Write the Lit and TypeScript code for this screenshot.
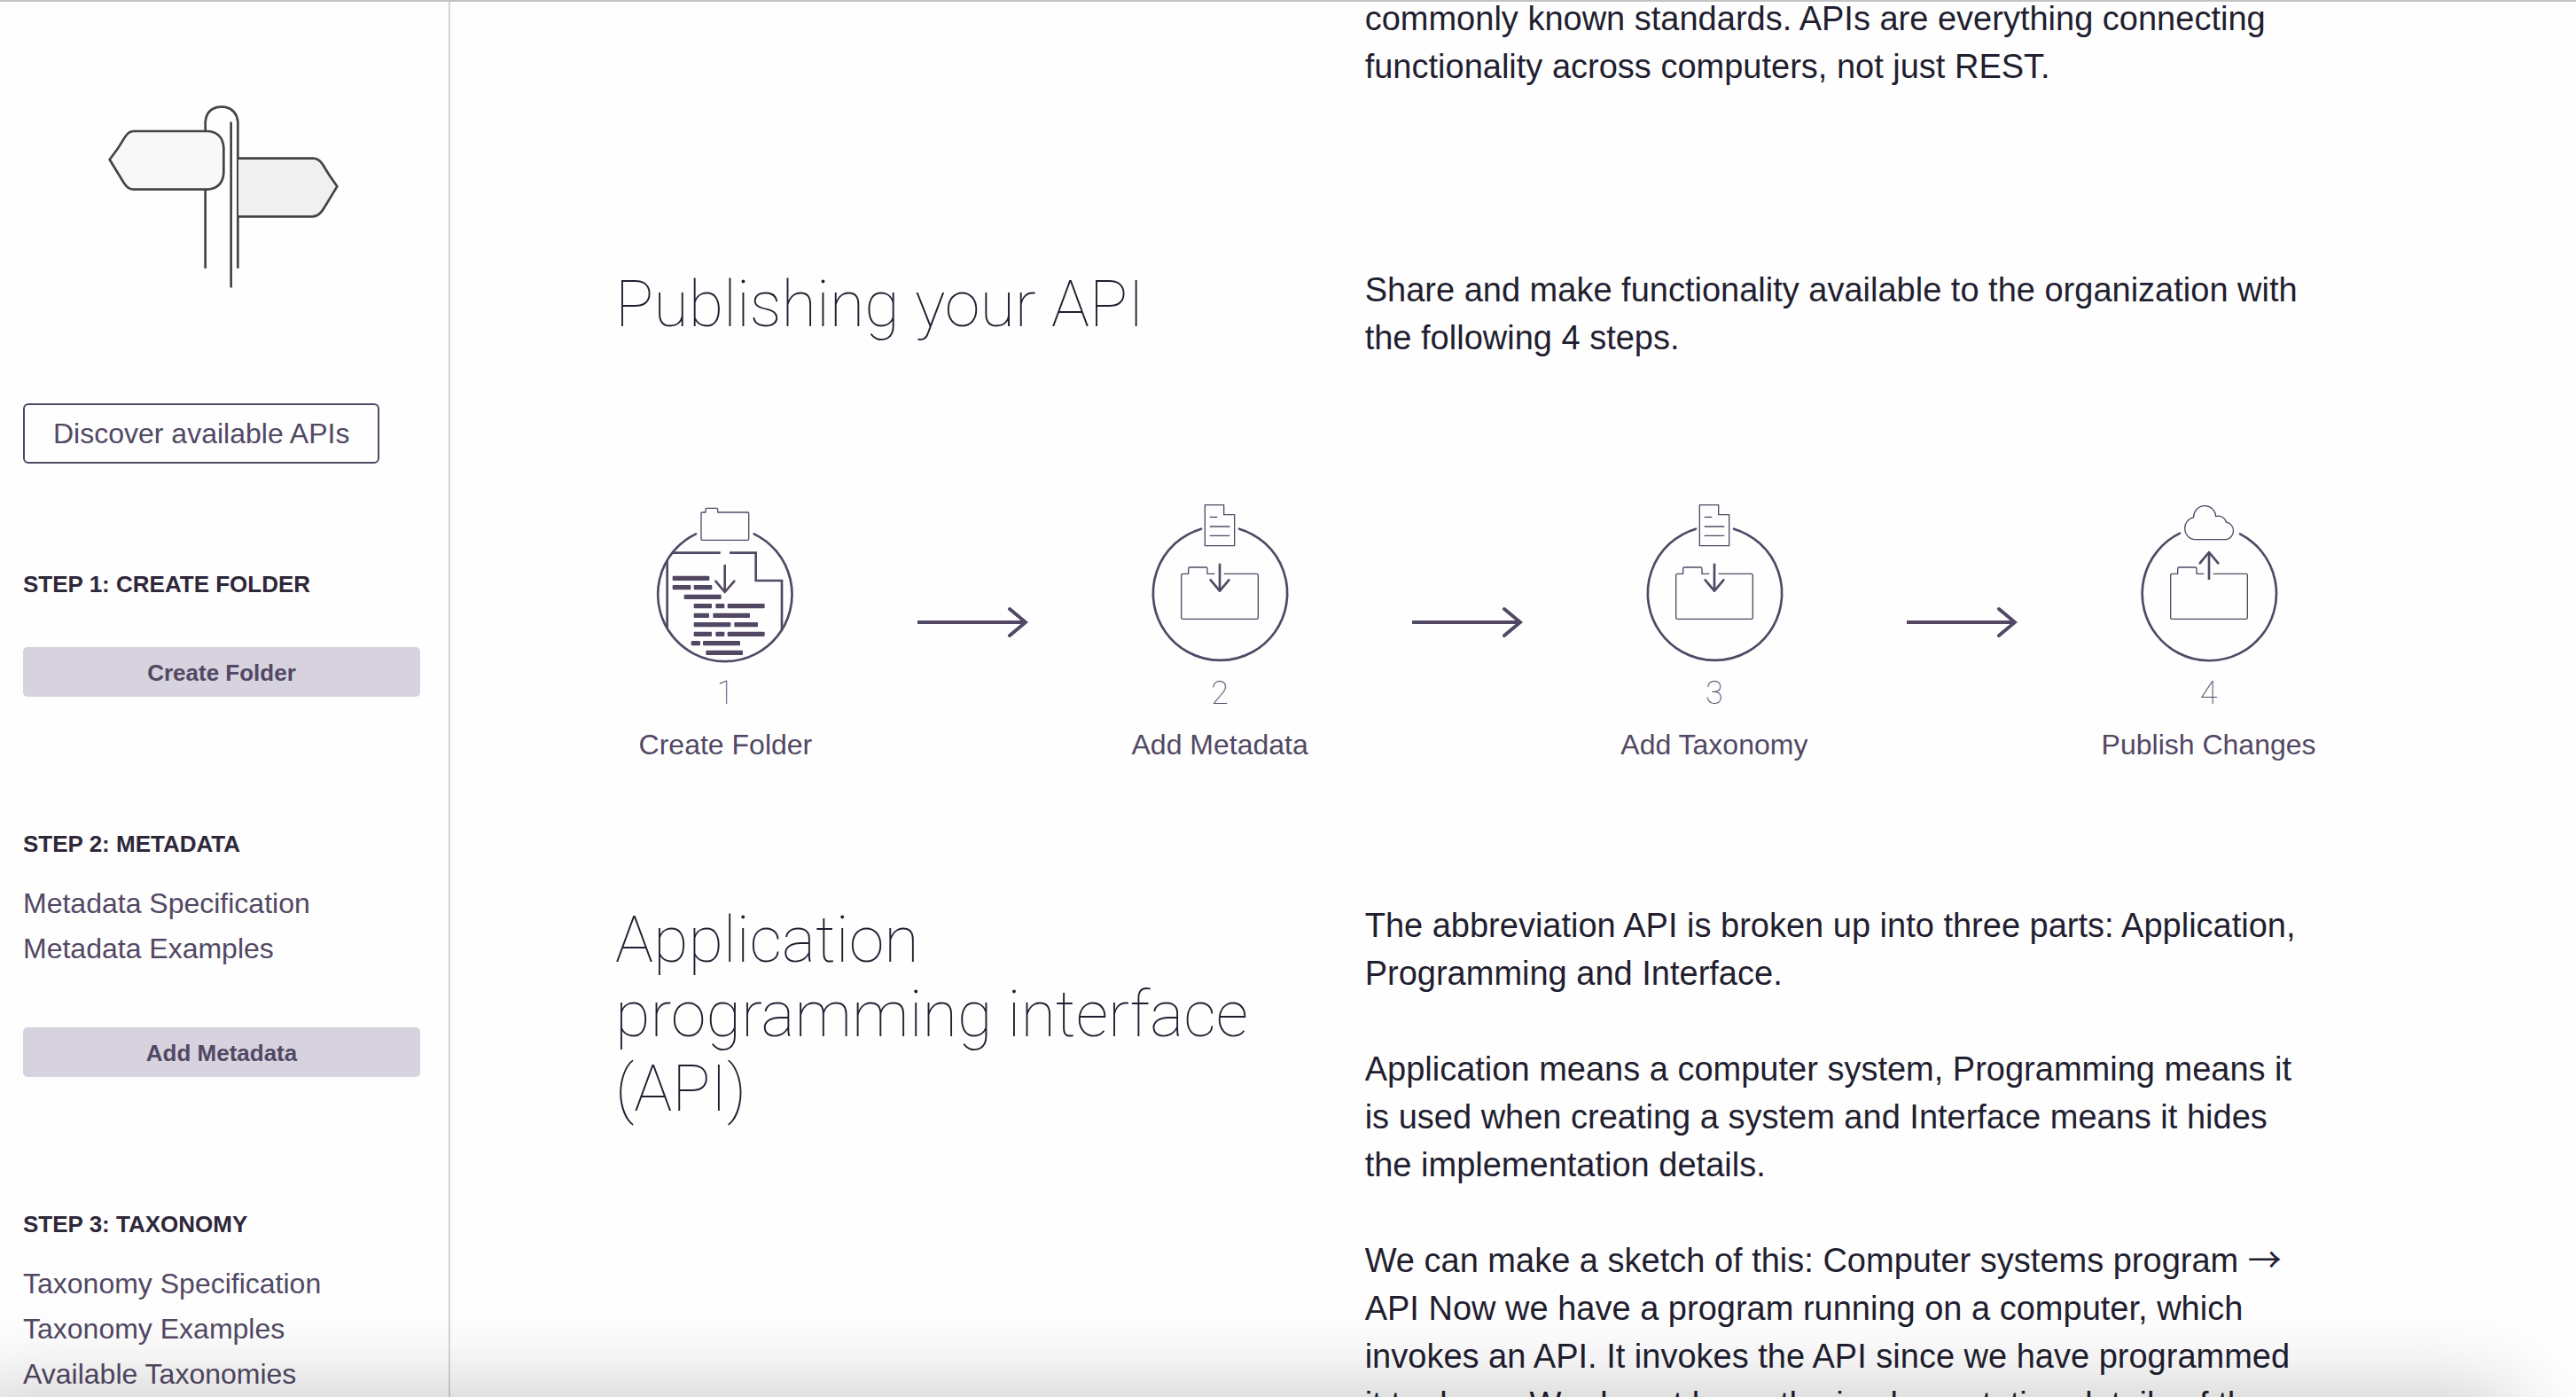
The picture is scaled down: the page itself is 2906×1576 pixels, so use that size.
import { LitElement, html, svg, css } from "lit";
import { customElement } from "lit/decorators.js";

interface SideStep {
  title: string;
  links: string[];
  action?: string;
}

const SIDE_STEPS: SideStep[] = [
  { title: "Step 1: Create Folder", links: [], action: "Create Folder" },
  {
    title: "Step 2: Metadata",
    links: ["Metadata Specification", "Metadata Examples"],
    action: "Add Metadata",
  },
  {
    title: "Step 3: Taxonomy",
    links: ["Taxonomy Specification", "Taxonomy Examples", "Available Taxonomies"],
  },
];

/* Lines of code in the first step's icon: [y, [x1, x2], ...] */
const CODE_LINES: [number, ...[number, number][]][] = [
  [313, [118, 243]],
  [344, [118, 180], [190, 252]],
  [376, [157, 283]],
  [407, [190, 251], [264, 294], [304, 430]],
  [439, [190, 242], [255, 380]],
  [470, [190, 315], [327, 407]],
  [502, [190, 251], [264, 294], [304, 430]],
  [533, [181, 212], [221, 347]],
  [565, [231, 356]],
];

const folder = svg`
  <path class="thin" d="M303 298H278V281Q278 276 273 276H219Q214 276 214 281V298H195Q190 298 190 303V446Q190 451 195 451H445Q450 451 450 446V303Q450 298 445 298H334"/>
`;

const createIcon = html`
  <svg class="icon" viewBox="56 60 480 540" aria-hidden="true">
    <path class="bold" d="M197 163A227 227 0 1 0 394 163"/>
    <path class="thin" d="M218 90H230V80Q230 76 234 76H267Q271 76 271 80V90H373Q376 90 376 93V181Q376 184 373 184H218Q215 184 215 181V93Q215 90 218 90Z"/>
    <path class="bold butt" d="M100 254V484M118 227H280M311 227H400V321H488V488"/>
    <path class="bold butt" d="M295 267V358"/>
    <path class="bold" d="M264 323L295 360L327 323"/>
    ${CODE_LINES.map(([y, ...bars]) =>
      bars.map(
        ([a, b]) => svg`<rect class="bar" x=${a} y=${y - 8} width=${b - a} height="16" rx="3"/>`,
      ),
    )}
  </svg>
`;

const documentIcon = html`
  <svg class="icon" viewBox="80 60 480 540" aria-hidden="true">
    <path class="bold" d="M257 146A227 227 0 1 0 386 146"/>
    <path class="thin" d="M270 65H334V98H370V203H270ZM286 106H312M286 138H354M286 169H354"/>
    ${folder}
    <path class="bold butt" d="M320 263V354"/>
    <path class="bold" d="M289 319L320 356L351 319"/>
  </svg>
`;

const publishIcon = html`
  <svg class="icon" viewBox="126 60 480 540" aria-hidden="true">
    <path class="bold" d="M267 161A227 227 0 1 0 471 163"/>
    <path class="thin" d="M316 182A37 38 0 0 1 314 107A37 37 0 0 1 389 104A27 27 0 0 1 424 123A30 30 0 0 1 424 182Z"/>
    <g transform="translate(46 0)">${folder}</g>
    <path class="bold butt" d="M366 318V226"/>
    <path class="bold" d="M335 262L366 225L397 262"/>
  </svg>
`;

const FLOW = [
  { label: "Create Folder", icon: createIcon },
  { label: "Add Metadata", icon: documentIcon },
  { label: "Add Taxonomy", icon: documentIcon },
  { label: "Publish Changes", icon: publishIcon },
];

@customElement("app-root")
export class AppRoot extends LitElement {
  static styles = css`
    :host {
      display: flex;
      position: relative;
      box-sizing: border-box;
      height: 100vh;
      overflow: hidden;
      border-top: 2px solid #c4c4c4;
      background: #fefefe;
      color: #221e30;
      font-family: "Liberation Sans", Arial, Helvetica, sans-serif;
    }
    * {
      box-sizing: border-box;
    }
    h1,
    h2,
    h3,
    p,
    ul,
    ol {
      margin: 0;
      padding: 0;
      list-style: none;
    }
    a {
      color: #524864;
      text-decoration: none;
    }
    .sidebar {
      flex: none;
      width: 508px;
      padding: 98px 32px 0 26px;
      border-right: 2px solid #d6d3de;
    }
    .logo {
      display: block;
      width: 300px;
      height: 240px;
      margin-left: 74px;
    }
    .logo path {
      fill: none;
      stroke: #444;
      stroke-width: 8;
      stroke-linecap: round;
    }
    .logo .left {
      fill: #f8f8f8;
    }
    .logo .right {
      fill: #f0f0f0;
    }
    .discover {
      display: block;
      width: fit-content;
      margin-top: 115px;
      padding: 0 32px;
      border: 2px solid #524864;
      border-radius: 6px;
      font-size: 32px;
      line-height: 64px;
    }
    .group {
      margin-top: 139px;
    }
    .group:first-of-type {
      margin-top: 109px;
    }
    .group-title {
      color: #2e283a;
      font-size: 26px;
      line-height: 54px;
      text-transform: uppercase;
    }
    .links {
      margin: 15px 0 63px;
      font-size: 32px;
      line-height: 51px;
    }
    .action {
      display: block;
      width: 100%;
      height: 56px;
      margin-top: 44px;
      border: 0;
      border-radius: 5px;
      background: #d6d3de;
      color: #524864;
      font: bold 26px/56px "Liberation Sans", Arial, sans-serif;
    }
    .main {
      flex: 1;
      min-width: 0;
      padding: 0 275px 0 171px;
      overflow: hidden;
    }
    .section {
      display: grid;
      grid-template-columns: 11fr 14fr;
      padding: 0 15px;
    }
    .section-title {
      padding: 2px 90px 0 0;
      font-family: Roboto, Inter, sans-serif;
      font-size: 72px;
      font-weight: 100;
      line-height: 84px;
    }
    .prose {
      padding-right: 10px;
      font-size: 38px;
      line-height: 54px;
    }
    .prose p + p {
      margin-top: 54px;
    }
    .glyph {
      font-family: "Noto Sans CJK SC", sans-serif;
      line-height: 1;
    }
    .intro {
      margin-top: -8px;
    }
    .publishing {
      margin-top: 198px;
    }
    .flow {
      display: grid;
      grid-template-columns: repeat(7, 1fr);
      margin-top: 160px;
      color: #524864;
    }
    .step {
      display: flex;
      flex-direction: column;
      align-items: center;
      white-space: nowrap;
    }
    .icon {
      display: block;
      width: 160px;
      height: 180px;
    }
    .icon path {
      fill: none;
      stroke: #524864;
      stroke-linejoin: round;
    }
    .icon .bold {
      stroke-width: 8;
      stroke-linecap: round;
    }
    .icon .butt {
      stroke-linecap: butt;
      stroke-linejoin: miter;
    }
    .icon .thin {
      stroke-width: 4;
    }
    .bar {
      fill: #524864;
    }
    .number {
      margin-top: 13px;
      font-family: Roboto, Inter, sans-serif;
      font-size: 36px;
      font-weight: 100;
      line-height: 42px;
    }
    .label {
      margin-top: 12px;
      font-size: 32px;
      line-height: 50px;
    }
    .arrow {
      display: block;
      justify-self: center;
      width: 126px;
      height: 40px;
      margin-top: 114px;
      fill: none;
      stroke: #524864;
      stroke-width: 4;
    }
    .api {
      margin-top: 152px;
    }
    .shade {
      position: absolute;
      top: 100%;
      left: -40px;
      right: 70px;
      height: 200px;
      border-radius: 20px;
      box-shadow: 0 0 100px rgba(0, 0, 0, 0.24);
      pointer-events: none;
    }
  `;

  render() {
    return html`
      <nav class="sidebar" aria-label="API publishing">
        <svg class="logo" viewBox="300 300 900 720" aria-hidden="true">
          <path d="M695 905V412Q700 366 743 362H758Q800 368 805 412V905"/>
          <path d="M782 416V970"/>
          <path class="right" d="M807 536H1060Q1078 536 1091 555Q1112 591 1141 631L1096 705Q1080 733 1056 733H807"/>
          <path class="left" d="M452 444H704Q753 448 757 499V586Q753 636 704 641H452Q434 641 420 620L371 540Q400 504 421 467Q434 444 452 444Z"/>
        </svg>
        <a class="discover" href="#discover">Discover available APIs</a>
        ${SIDE_STEPS.map(
          (s) => html`
            <section class="group">
              <h2 class="group-title">${s.title}</h2>
              ${s.links.length
                ? html`<ul class="links">
                    ${s.links.map((l) => html`<li><a href="#docs">${l}</a></li>`)}
                  </ul>`
                : null}
              ${s.action ? html`<button class="action" type="button">${s.action}</button>` : null}
            </section>
          `,
        )}
      </nav>
      <main class="main">
        <section class="section intro">
          <div></div>
          <div class="prose">
            <p>
              commonly known standards. APIs are everything connecting functionality across
              computers, not just REST.
            </p>
          </div>
        </section>
        <section class="section publishing">
          <h1 class="section-title">Publishing your API</h1>
          <div class="prose">
            <p>
              Share and make functionality available to the organization with the following 4
              steps.
            </p>
          </div>
        </section>
        <div class="flow">
          ${FLOW.map(
            (f, i) => html`
              ${i
                ? html`<svg class="arrow" viewBox="0 0 126 40" aria-hidden="true">
                    <path d="M1 20H122"/>
                    <path d="M105 5L123 20L105 35" stroke-linecap="round"/>
                  </svg>`
                : null}
              <div class="step">
                ${f.icon}
                <div class="number">${i + 1}</div>
                <div class="label">${f.label}</div>
              </div>
            `,
          )}
        </div>
        <section class="section api">
          <h1 class="section-title">Application programming interface (API)</h1>
          <div class="prose">
            <p>
              The abbreviation API is broken up into three parts: Application, Programming and
              Interface.
            </p>
            <p>
              Application means a computer system, Programming means it is used when creating a
              system and Interface means it hides the implementation details.
            </p>
            <p>
              We can make a sketch of this: Computer systems program
              <span class="glyph">→</span> API Now we have a program running on a computer, which
              invokes an API. It invokes the API since we have programmed it to do so. We do not
              know the implementation details of the
            </p>
          </div>
        </section>
      </main>
      <div class="shade"></div>
    `;
  }
}
